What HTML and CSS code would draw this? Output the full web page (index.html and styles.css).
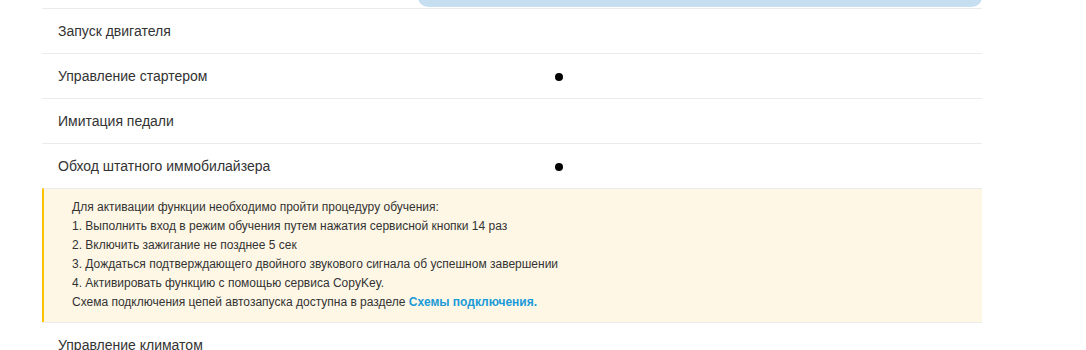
FILE: index.html
```html
<!DOCTYPE html>
<html lang="ru">
<head>
<meta charset="utf-8">
<link rel="stylesheet" href="styles.css">
</head>
<body>
<div class="wrap">
  <div class="top">
    <div class="tab"></div>
  </div>
  <div class="row"><span class="name">Запуск двигателя</span><span class="val"></span></div>
  <div class="row"><span class="name">Управление стартером</span><span class="val"><i class="dot"></i></span></div>
  <div class="row"><span class="name">Имитация педали</span><span class="val"></span></div>
  <div class="row"><span class="name">Обход штатного иммобилайзера</span><span class="val"><i class="dot"></i></span></div>
  <div class="notice">
    <p>Для активации функции необходимо пройти процедуру обучения:</p>
    <p>1. Выполнить вход в режим обучения путем нажатия сервисной кнопки 14 раз</p>
    <p>2. Включить зажигание не позднее 5 сек</p>
    <p>3. Дождаться подтверждающего двойного звукового сигнала об успешном завершении</p>
    <p>4. Активировать функцию с помощью сервиса CopyKey.</p>
    <p>Схема подключения цепей автозапуска доступна в разделе <a class="link" href="#">Схемы подключения.</a></p>
  </div>
  <div class="row"><span class="name">Управление климатом</span><span class="val"></span></div>
</div>
</body>
</html>
```

FILE: styles.css
```css
html, body {
  margin: 0;
  padding: 0;
  background: #fff;
  overflow: hidden;
}
body {
  font-family: "Liberation Sans", Arial, sans-serif;
  color: #333;
}
.wrap {
  width: 940px;
  margin-left: 42px;
}
.top {
  height: 8px;
  display: flex;
  justify-content: flex-end;
}
.tab {
  width: 564px;
  height: 17px;
  margin-top: -10px;
  background: #c5dff1;
  border-radius: 0 0 10px 10px;
}
.row {
  border-top: 1px solid #ebebeb;
  height: 44px;
  display: grid;
  grid-template-columns: 497px auto;
  align-items: center;
  padding-left: 16px;
  font-size: 14px;
}
.val {
  display: flex;
  align-items: center;
}
.dot {
  display: block;
  width: 8px;
  height: 8px;
  border-radius: 50%;
  background: #000;
  margin-top: 2px;
}
.notice {
  border-top: 1px solid #ebebeb;
  background: #fef7e6;
  border-left: 2px solid #fcc400;
  padding: 9px 0 10px 28px;
  font-size: 12px;
  line-height: 19px;
  color: #333;
}
.notice p {
  margin: 0;
}
.link {
  color: #1a9ad8;
  font-weight: bold;
  text-decoration: none;
}
```
